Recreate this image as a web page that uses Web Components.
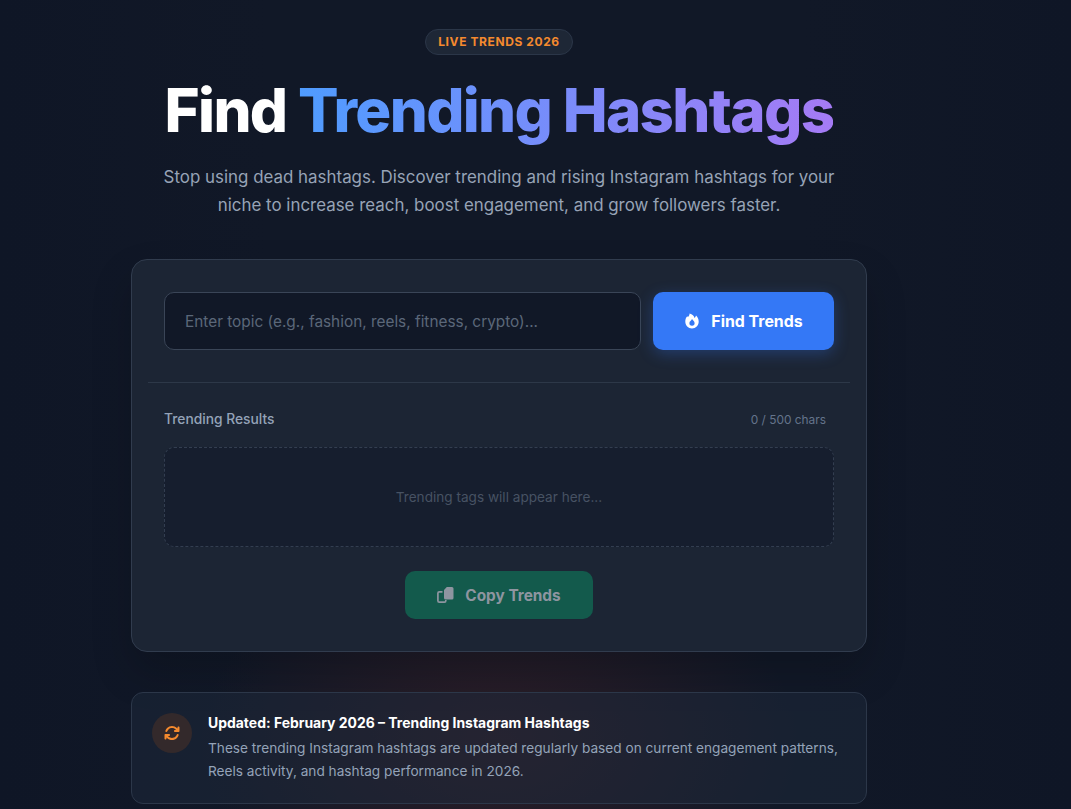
<!DOCTYPE html>
<html lang="en"><head><meta charset="utf-8"><title>Find Trending Hashtags</title>
<style>
html,body{margin:0;height:809px;overflow:hidden;background:#111827;}
body{font-family:Inter,"Liberation Sans",sans-serif;color:#fff;
background:radial-gradient(ellipse 300px 190px at 499px 740px,rgba(125,45,40,.26),rgba(125,45,40,0) 100%),
linear-gradient(90deg,#0f1626 0,#111827 25%,#111827 75%,#0f1626 100%);}
</style></head><body>
<trend-app></trend-app>
<template id="t-app"><style>
:host{display:flex;flex-direction:column;align-items:center;width:998px;padding-top:29px;box-sizing:border-box}
</style><trend-hero></trend-hero><trend-card></trend-card><update-note></update-note></template>

<template id="t-hero"><style>
:host{display:flex;flex-direction:column;align-items:center;width:736px}
.badge{height:26px;box-sizing:border-box;padding:0 12px 1px;display:flex;align-items:center;border:1px solid #2b3648;border-radius:13px;background:#1e2736;color:#f58a2e;font-size:12px;font-weight:700;letter-spacing:.6px;white-space:nowrap}
h1{margin:22px 0 0;font-size:60px;line-height:66px;font-weight:800;letter-spacing:-1.66px;color:#fff;white-space:nowrap}
h1 span{background:linear-gradient(90deg,#4f9cff,#a57bf5);-webkit-background-clip:text;background-clip:text;color:transparent}
p{margin:20px 0 0;width:700px;text-align:center;color:#97a3b6;font-size:16.92px;line-height:28px}
</style><div class="badge">LIVE TRENDS 2026</div>
<h1>Find <span>Trending Hashtags</span></h1>
<p>Stop using dead hashtags. Discover trending and rising Instagram hashtags for your niche to increase reach, boost engagement, and grow followers faster.</p></template>

<template id="t-card"><style>
:host{display:block;width:736px;box-sizing:border-box;margin-top:40px;padding:32px 32px 32px;background:#1c2534;border:1px solid #313c4e;border-radius:16px;box-shadow:0 20px 40px rgba(0,0,0,.18)}
.row{display:flex;gap:12px}
.input{flex:1;height:58px;box-sizing:border-box;border:1px solid #3a4557;border-radius:10px;background:#111827;display:flex;align-items:center;padding:0 20px;color:#5b6779;font-size:15.36px}
.btn{width:181px;height:58px;box-sizing:border-box;border-radius:10px;background:#3478f6;display:flex;align-items:center;justify-content:center;gap:11px;font-size:15.9px;font-weight:700;color:#fff;box-shadow:0 4px 15px rgba(52,120,246,.3)}
hr{border:0;border-top:1px solid #2d3848;margin:32px -16px 0;height:0}
.head{display:flex;justify-content:space-between;align-items:center;margin-top:27px;height:18px;padding-right:8px}
.label{font-size:13.8px;font-weight:500;color:#94a3b8}
.count{font-size:11.9px;color:#64748b}
.out{margin-top:19px;height:100px;box-sizing:border-box;border:1px dashed #333e50;border-radius:10px;background:#161e2e;display:flex;align-items:center;justify-content:center;font-size:13.6px;color:#475263}
.copywrap{display:flex;justify-content:center;margin-top:24px}
.copy{width:188px;height:48px;border-radius:10px;background:#135a4c;display:flex;align-items:center;justify-content:center;gap:11px;font-size:15.36px;font-weight:700;color:#8e95a0}
svg{display:block}
</style>
<div class="row"><div class="input">Enter topic (e.g., fashion, reels, fitness, crypto)...</div>
<div class="btn"><svg width="16" height="16" viewBox="0 0 16 16"><path fill="#fff" fill-rule="evenodd" d="M5.600.500C5.500 2.300 4.700 3.300 3.900 4.100L3.300 3.200C2 4.600 1.300 6.300 1.300 8.500c0 3.900 3 7 6.700 7s6.700-3.100 6.700-7c0-2.600-1.400-4.900-2.700-6-.3 1.100-.8 1.900-1.500 2.500C10.200 3 8.300 1.100 5.600.500zM8 5.900c.5 1.200 2.600 2 2.600 4.200A2.600 2.600 0 0 1 8 12.800a2.600 2.600 0 0 1-2.600-2.700C5.400 8 7.500 7.400 8 5.900z"/></svg>Find Trends</div></div>
<hr>
<div class="head"><span class="label">Trending Results</span><span class="count">0 / 500 chars</span></div>
<div class="out">Trending tags will appear here...</div>
<div class="copywrap"><div class="copy"><svg width="17" height="16" viewBox="0 0 17 16"><path fill="#8e95a0" d="M9.800 0H15a1.500 1.500 0 0 1 1.500 1.500V11a1.500 1.500 0 0 1-1.500 1.500H8.500A1.500 1.500 0 0 1 7 11V3z"/><path fill="none" stroke="#8e95a0" stroke-width="1.700" d="M5.500 4.800H2.300A1.400 1.400 0 0 0 .9 6.200V13.700a1.400 1.400 0 0 0 1.400 1.400H7.400a1.400 1.400 0 0 0 1.400-1.400V13"/></svg>Copy Trends</div></div></template>

<template id="t-note"><style>
:host{display:flex;gap:16px;width:736px;height:112px;box-sizing:border-box;margin-top:40px;padding:20px;background:rgba(30,41,59,.5);border:1px solid #2c3749;border-radius:12px}
.ic{flex:none;width:40px;height:40px;border-radius:50%;background:#33292b;display:flex;align-items:center;justify-content:center}
.txt{margin-top:-1px}
b{display:block;font-size:13.95px;line-height:21px;font-weight:700;color:#fff}
p{margin:4px 0 0;font-size:13.66px;line-height:23px;color:#94a3b8}
</style><div class="ic"><svg width="16" height="16" viewBox="0 0 512 512"><path fill="#f58a2e" d="M105.100 202.600c7.700-21.800 20.200-42.300 37.800-59.800c62.500-62.500 163.800-62.500 226.300 0L386.300 160H352c-17.700 0-32 14.300-32 32s14.300 32 32 32H463.500c17.700 0 32-14.300 32-32V80c0-17.700-14.300-32-32-32s-32 14.300-32 32v35.200L414.400 97.600c-87.500-87.500-229.300-87.500-316.800 0C73.200 122 55.600 150.700 44.800 181.400c-5.900 16.700 2.900 34.900 19.500 40.800s34.900-2.900 40.800-19.500zM39 289.300c-5 1.500-9.800 4.200-13.700 8.200c-4 4-6.700 8.800-8.100 14c-.3 1.200-.6 2.500-.8 3.800c-.3 1.700-.4 3.400-.4 5.100V432c0 17.700 14.300 32 32 32s32-14.300 32-32V396.900l17.200 17.100c87.500 87.400 229.300 87.400 316.700 0c24.400-24.400 42.100-53.100 52.900-83.700c5.900-16.700-2.900-34.900-19.500-40.800s-34.900 2.900-40.800 19.500c-7.700 21.800-20.200 42.300-37.800 59.800c-62.500 62.500-163.800 62.500-226.300 0l-.1-.1L125.600 352H160c17.700 0 32-14.300 32-32s-14.300-32-32-32H48.400c-1.600 0-3.200 .1-4.800 .3s-3.100 .5-4.600 1z"/></svg></div>
<div class="txt"><b>Updated: February 2026 – Trending Instagram Hashtags</b><p>These trending Instagram hashtags are updated regularly based on current engagement patterns, Reels activity, and hashtag performance in 2026.</p></div></template>
<script>
const def=(n,t)=>customElements.define(n,class extends HTMLElement{constructor(){super();this.attachShadow({mode:'open'}).appendChild(document.getElementById(t).content.cloneNode(true));}});
def('trend-hero','t-hero');def('trend-card','t-card');def('update-note','t-note');def('trend-app','t-app');
</script>
</body></html>
